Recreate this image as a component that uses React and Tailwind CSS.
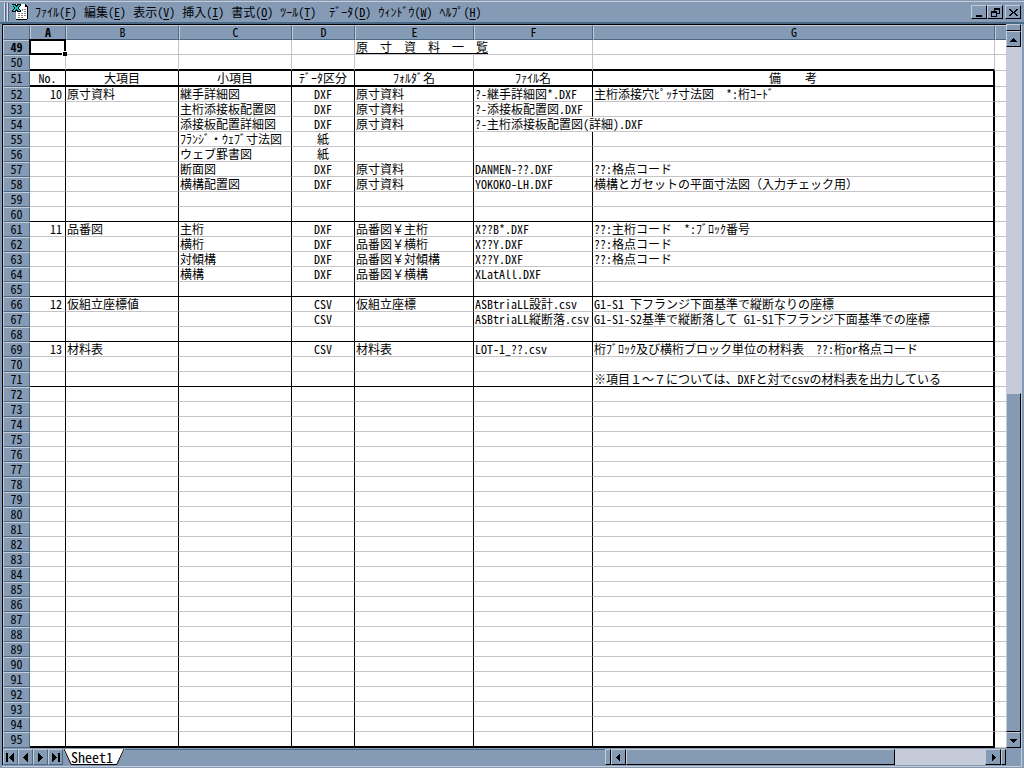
import clsx from 'clsx';

const COLS = ['A', 'B', 'C', 'D', 'E', 'F', 'G'];

const ROWS = {
  49: { E: '原　寸　資　料　一　覧' },
  51: { A: 'No.', B: '大項目', C: '小項目', D: 'ﾃﾞｰﾀ区分', E: 'ﾌｫﾙﾀﾞ名', F: 'ﾌｧｲﾙ名', G: '備　　考' },
  52: { A: '10', B: '原寸資料', C: '継手詳細図', D: 'DXF', E: '原寸資料', F: '?-継手詳細図*.DXF', G: '主桁添接穴ﾋﾟｯﾁ寸法図　*:桁ｺｰﾄﾞ' },
  53: { C: '主桁添接板配置図', D: 'DXF', E: '原寸資料', F: '?-添接板配置図.DXF' },
  54: { C: '添接板配置詳細図', D: 'DXF', E: '原寸資料', F: '?-主桁添接板配置図(詳細).DXF' },
  55: { C: 'ﾌﾗﾝｼﾞ・ｳｪﾌﾞ寸法図', D: '紙' },
  56: { C: 'ウェブ罫書図', D: '紙' },
  57: { C: '断面図', D: 'DXF', E: '原寸資料', F: 'DANMEN-??.DXF', G: '??:格点コード' },
  58: { C: '横構配置図', D: 'DXF', E: '原寸資料', F: 'YOKOKO-LH.DXF', G: '横構とガセットの平面寸法図（入力チェック用）' },
  61: { A: '11', B: '品番図', C: '主桁', D: 'DXF', E: '品番図￥主桁', F: 'X??B*.DXF', G: '??:主桁コード　*:ﾌﾞﾛｯｸ番号' },
  62: { C: '横桁', D: 'DXF', E: '品番図￥横桁', F: 'X??Y.DXF', G: '??:格点コード' },
  63: { C: '対傾構', D: 'DXF', E: '品番図￥対傾構', F: 'X??Y.DXF', G: '??:格点コード' },
  64: { C: '横構', D: 'DXF', E: '品番図￥横構', F: 'XLatAll.DXF' },
  66: { A: '12', B: '仮組立座標値', D: 'CSV', E: '仮組立座標', F: 'ASBtriaLL設計.csv', G: 'G1-S1 下フランジ下面基準で縦断なりの座標' },
  67: { D: 'CSV', F: 'ASBtriaLL縦断落.csv', G: 'G1-S1-S2基準で縦断落して G1-S1下フランジ下面基準での座標' },
  69: { A: '13', B: '材料表', D: 'CSV', E: '材料表', F: 'LOT-1_??.csv', G: '桁ﾌﾞﾛｯｸ及び横桁ブロック単位の材料表　??:桁or格点コード' },
  71: { G: '※項目１～７については、DXFと対でcsvの材料表を出力している' },
};

const ROW_NUMBERS = Array.from({ length: 47 }, (_, i) => i + 49);
const THICK = [50, 51, 95];
const SECTION_END = [60, 65, 68, 71];

const MENUS = [
  ['ﾌｧｲﾙ', 'F'], ['編集', 'E'], ['表示', 'V'], ['挿入', 'I'], ['書式', 'O'],
  ['ﾂｰﾙ', 'T'], ['ﾃﾞｰﾀ', 'D'], ['ｳｨﾝﾄﾞｳ', 'W'], ['ﾍﾙﾌﾟ', 'H'],
];

const RAISED = 'flex shrink-0 items-center justify-center bg-[#849ab5] border-t border-l border-t-[#c6cbd6] border-l-[#c6cbd6] border-b border-r border-b-black border-r-black';
const TRACK = 'bg-[#c6cbd9]';

// half-width forms for latin runs so they line up with the kana grid
function Text({ children }) {
  return children.split(/([ -~]+)/).map((part, i) =>
    i % 2 ? <span key={i} className="[font-feature-settings:'hwid']">{part}</span> : part
  );
}

function ExcelIcon() {
  return (
    <svg width="16" height="16" viewBox="0 0 16 16" shapeRendering="crispEdges" className="shrink-0">
      <path d="M4 0h9l2 2v13H4z" fill="#fff" />
      <path d="M13 0h1v1h1v1h1v13h-1v1H4v-1h11V3h-2z" fill="#000" />
      <path d="M6 9h2v1H6zM9 9h2v1H9zM12 9h2v1h-2zM6 11h2v1H6zM9 11h2v1H9zM12 11h2v1h-2zM6 13h2v1H6zM9 13h2v1H9zM10 5h1v2h-1zM12 5h2v1h-2zM12 7h2v1h-2z" fill="#848284" />
      <path d="M0 0h4v1h1V0h4v2H8v1H7v2h1v1h1v2H5V7H4v1H0V6h1V5h1V3H1V2H0z" fill="#000" />
      <path d="M0 1h3v1h1v1h1V2h1V1h2v1H7v1H6v2h1v1h1v1H6V6H5V5H4v1H3v1H1V6h1V5h1V3H2V2H0z" fill="#00cfce" />
    </svg>
  );
}

function Arrow({ d }) {
  return (
    <svg width="9" height="9" viewBox="0 0 9 9" shapeRendering="crispEdges">
      <path d={d} fill="#000" />
    </svg>
  );
}

const UP = 'M4 3h1v1h1v1h1v1h1v1H1V6h1V5h1V4h1z';
const DOWN = 'M1 3h7v1H7v1H6v1H5v1H4V6H3V5H2V4H1z';
const LEFT = 'M2 4h1V3h1V2h1V1h1v7H5V7H4V6H3V5H2z';
const RIGHT = 'M3 1h1v1h1v1h1v1h1v1H6v1H5v1H4v1H3z';
const FIRST = 'M0 0h2v9H0zM3 4h1V3h1V2h1V1h1V0h1v9H7V8H6V7H5V6H4V5H3z';
const PREV = 'M2 4h1V3h1V2h1V1h1V0h1v9H6V8H5V7H4V6H3V5H2z';
const NEXT = 'M2 0h1v1h1v1h1v1h1v1h1v1H6v1H5v1H4v1H3v1H2z';
const LAST = 'M1 0h1v1h1v1h1v1h1v1h1v1H5v1H4v1H3v1H2v1H1zM7 0h2v9H7z';

function MenuBar() {
  return (
    <header className="flex h-[23px] items-center border-t border-b-2 border-t-[#c6cbd6] border-b-[#4a6984] pr-[3px] pl-1">
      <div className="flex gap-px">
        <span className="h-[18px] w-[2px] border-l border-[#dde2ea] bg-[#4a6984]" />
        <span className="h-[18px] w-[2px] border-l border-[#dde2ea] bg-[#4a6984]" />
      </div>
      <div className="ml-[3px]"><ExcelIcon /></div>
      <nav className="ml-[7px] flex grow">
        {MENUS.map(([label, key]) => (
          <button key={key} className="min-w-[49px] pr-[7px] text-left leading-4 whitespace-nowrap">
            {label}
            <span className="[font-feature-settings:'hwid']">(<u className="underline-offset-2">{key}</u>)</span>
          </button>
        ))}
      </nav>
      <div className="flex">
        <button aria-label="Minimize" className={clsx(RAISED, 'h-[14px] w-4')}><Arrow d="M1 7h6v2H1z" /></button>
        <button aria-label="Restore" className={clsx(RAISED, 'h-[14px] w-4')}>
          <Arrow d="M3 0h6v6H6V5h2V2H4v1H3zM0 3h6v6H0zM1 5v3h4V5z" />
        </button>
        <button aria-label="Close" className={clsx(RAISED, 'ml-[2px] h-[14px] w-4')}>
          <Arrow d="M0 1h2v1h1v1h1v1h1V3h1V2h1V1h2v1H8v1H7v1H6v1h1v1h1v1h1v1H7V7H6V6H5V5H4v1H3v1H2v1H0V7h1V6h1V5h1V4H2V3H1V2H0z" />
        </button>
      </div>
    </header>
  );
}

function Cell({ row, col }) {
  const value = ROWS[row]?.[col];
  const inTable = row >= 51;
  const spills = (row === 49 && col === 'E') || (row === 54 && col === 'F');
  return (
    <td
      className={clsx(
        'p-0 align-top leading-[14px] whitespace-nowrap',
        THICK.includes(row) ? 'border-b-2 border-b-black' : SECTION_END.includes(row) ? 'border-b border-b-black' : 'border-b border-b-[#c6c3c6]',
        !spills && (inTable && col === 'G' ? 'border-r-2' : 'border-r'),
        inTable ? 'border-r-black' : 'border-r-[#c6c3c6]',
        row === 51 || col === 'D' ? 'text-center' : col === 'A' ? 'pr-[3px] text-right' : 'pl-px text-left',
        row === 49 && col === 'A' && 'relative',
        row === 49 && col === 'E' && 'underline underline-offset-1'
      )}
    >
      {value && <Text>{value}</Text>}
      {row === 49 && col === 'A' && (
        <span className="absolute -inset-px border-2 border-black">
          <span className="absolute -right-[3px] -bottom-[3px] size-[5px] border-t border-l border-white bg-black" />
        </span>
      )}
    </td>
  );
}

function Sheet() {
  const head = 'p-0 align-top border-t border-l border-t-[#c6cbd6] border-l-[#c6cbd6] border-r border-b border-r-[#4a6984] border-b-[#4a6984] bg-[#849ab5]';
  return (
    <table className="w-full min-w-0 grow table-fixed border-separate border-spacing-0 border-t border-black bg-white leading-[12px]">
      <colgroup>
        <col className="w-[27px]" />
        <col className="w-[36px]" />
        <col className="w-[113px]" />
        <col className="w-[113px]" />
        <col className="w-[63px]" />
        <col className="w-[119px]" />
        <col className="w-[119px]" />
        <col />
        <col className="w-[11px]" />
      </colgroup>
      <thead>
        <tr className="h-[15px]">
          <th className={head} />
          {COLS.map((c) => (
            <th key={c} scope="col" className={clsx(head, c === 'A' ? 'font-bold' : 'font-normal')}><Text>{c}</Text></th>
          ))}
          <th className={clsx(head, 'border-r-0')} />
        </tr>
      </thead>
      <tbody>
        {ROW_NUMBERS.map((n) => (
          <tr key={n} className={THICK.includes(n) ? 'h-[16px]' : 'h-[15px]'}>
            <th scope="row" className={clsx(head, n === 49 ? 'font-bold' : 'font-normal')}><Text>{String(n)}</Text></th>
            {COLS.map((c) => <Cell key={c} row={n} col={c} />)}
            <td className="border-b border-[#c6c3c6] p-0" />
          </tr>
        ))}
      </tbody>
    </table>
  );
}

function VerticalScroll() {
  return (
    <div className={clsx('flex w-[15px] shrink-0 flex-col', TRACK)}>
      <div className={clsx(RAISED, 'h-[7px]')} />
      <button aria-label="Scroll up" className={clsx(RAISED, 'h-4')}><Arrow d={UP} /></button>
      <div className="grow-[348]" />
      <div className={clsx(RAISED, 'grow-[338]')} />
      <button aria-label="Scroll down" className={clsx(RAISED, 'h-4')}><Arrow d={DOWN} /></button>
    </div>
  );
}

function BottomBar() {
  const nav = 'flex w-[15px] shrink-0 items-center justify-center border-t border-l border-r border-b border-t-[#c6cbd6] border-l-[#c6cbd6] border-r-[#4a6984] border-b-[#4a6984]';
  return (
    <footer className="flex h-4 pr-[15px]">
      <div className="flex min-w-0 flex-[3]">
        <button aria-label="First sheet" className={nav}><Arrow d={FIRST} /></button>
        <button aria-label="Previous sheet" className={nav}><Arrow d={PREV} /></button>
        <button aria-label="Next sheet" className={nav}><Arrow d={NEXT} /></button>
        <button aria-label="Last sheet" className={nav}><Arrow d={LAST} /></button>
        <button className="relative w-[62px] shrink-0 pr-1 text-[14px] leading-[14px]">
          <svg viewBox="0 0 62 16" className="absolute inset-0 h-4 w-[62px]">
            <path d="M0 0h62l-8 15H8z" fill="#fff" />
            <path d="M1 0l7 15M61 0l-7 15M8 15.5h46" stroke="#000" fill="none" />
          </svg>
          <span className="relative underline underline-offset-1 [font-feature-settings:'hwid']">Sheet1</span>
        </button>
        <div className="grow border-t border-[#4a6984]" />
      </div>
      <div className={clsx('flex min-w-0 flex-[2]', TRACK)}>
        <div className={clsx(RAISED, 'w-[6px]')} />
        <button aria-label="Scroll left" className={clsx(RAISED, 'w-[15px]')}><Arrow d={LEFT} /></button>
        <div className={clsx(RAISED, 'grow-[268]')} />
        <div className="grow-[90]" />
        <button aria-label="Scroll right" className={clsx(RAISED, 'w-4')}><Arrow d={RIGHT} /></button>
        <div className={clsx(RAISED, 'w-[5px]')} />
      </div>
    </footer>
  );
}

export default function App() {
  return (
    <div className="bg-[#849ab5] pt-px font-['Noto_Sans_CJK_JP',sans-serif] text-[12px] text-black">
      <MenuBar />
      <main className="mx-[2px] border-r border-b border-[#c6cbd6] pb-px">
        <div className="flex border-l border-black">
          <Sheet />
          <VerticalScroll />
        </div>
        <div className="border-l border-black pt-px"><BottomBar /></div>
      </main>
      <div className="h-[2px]" />
    </div>
  );
}
